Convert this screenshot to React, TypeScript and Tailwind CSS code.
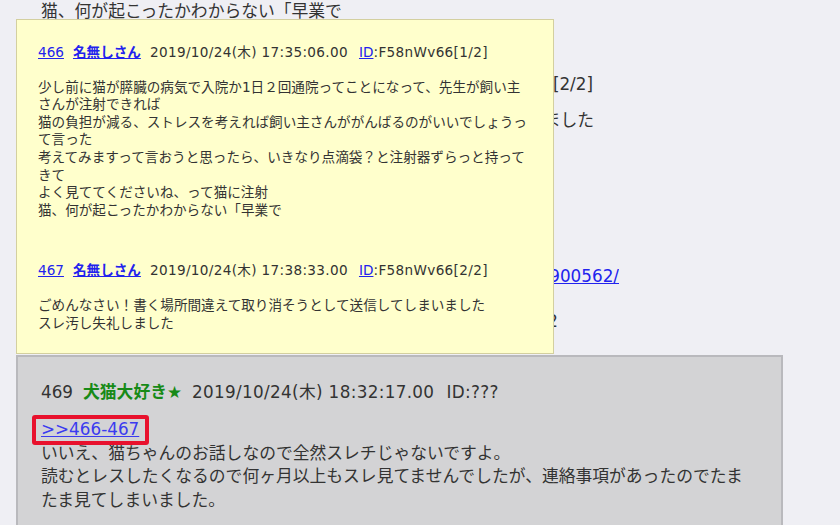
import * as React from 'react';

const font = { fontFamily: '"DejaVu Sans", "Noto Sans CJK JP", sans-serif' };

interface PostHeaderProps {
    no: string;
    name: string;
    date: string;
    id: string;
}

// header row inside the yellow quote popup
const PopupHeader = (props: PostHeaderProps) => (
    <div className="flex items-baseline whitespace-nowrap">
        <a className="text-[#2222ee] underline">{props.no}</a>
        <a className="ml-[9px] font-bold text-[#2222ee] underline">{props.name}</a>
        <span className="ml-[9px] tracking-[0.025em]">{props.date}</span>
        <a className="ml-[11px] text-[#2222ee] underline">ID</a>
        <span className="tracking-[0.025em]">:{props.id}</span>
    </div>
);

const popupPosts = [
    {
        no: '466',
        date: '2019/10/24(木) 17:35:06.00',
        id: 'F58nWv66[1/2]',
        lines: [
            '少し前に猫が膵臓の病気で入院か1日２回通院ってことになって、先生が飼い主',
            'さんが注射できれば',
            '猫の負担が減る、ストレスを考えれば飼い主さんががんばるのがいいでしょうっ',
            'て言った',
            '考えてみますって言おうと思ったら、いきなり点滴袋？と注射器ずらっと持って',
            'きて',
            'よく見ててくださいね、って猫に注射',
            '猫、何が起こったかわからない「早業で',
        ],
    },
    {
        no: '467',
        date: '2019/10/24(木) 17:38:33.00',
        id: 'F58nWv66[2/2]',
        lines: [
            'ごめんなさい！書く場所間違えて取り消そうとして送信してしまいました',
            'スレ汚し失礼しました',
        ],
    },
];

export default function App() {
    return (
        <div className="relative h-[525px] overflow-hidden bg-[#efeff4] pl-[16px] text-[#333333]" style={font}>
            {/* thread underneath the popup, only the part right of it shows */}
            <div className="text-[16.8px] leading-[23px]">
                <div className="pl-[25px] whitespace-nowrap">猫、何が起こったかわからない「早業で</div>
                <div className="ml-[538px] mt-[49.5px] flex w-[39px] justify-end overflow-hidden whitespace-nowrap">
                    ID:F58nWv66[2/2]
                </div>
                <div className="ml-[538px] mt-[13px] flex w-[40px] justify-end overflow-hidden whitespace-nowrap">
                    送信してしまいました
                </div>
                <div className="ml-[538px] mt-[133px] flex w-[65px] justify-end overflow-hidden whitespace-nowrap">
                    <a className="text-[#2222ee] underline">https://neko.5ch.net/test/read.cgi/cat/1571900562/</a>
                </div>
                <div className="ml-[538px] mt-[22px] flex w-[4px] justify-end overflow-hidden whitespace-nowrap">
                    2
                </div>
            </div>

            {/* reply card */}
            <div className="mt-[22.5px] w-[767px] border-2 border-[#b9b9bd] bg-[#d3d3d5] pl-[23px] pt-[24px] pb-[40px] text-[16.8px] leading-[23.5px]">
                <div className="flex items-baseline whitespace-nowrap">
                    <span>469</span>
                    <span className="ml-[10px] font-bold text-[#178a17]">犬猫大好き★</span>
                    <span className="ml-[10px] tracking-[0.02em]">2019/10/24(木) 18:32:17.00</span>
                    <span className="ml-[12px] tracking-[0.02em]">ID:???</span>
                </div>
                <div className="mt-[13.5px]">
                    <span className="relative inline-block">
                        <a className="text-[#3b3bef] underline">&gt;&gt;466-467</a>
                        <span className="pointer-events-none absolute -top-[3.5px] -bottom-[3.5px] -left-[9px] -right-[10px] rounded-[3px] border-4 border-[#e8112d]"></span>
                    </span>
                </div>
                <div className="whitespace-nowrap">いいえ、猫ちゃんのお話しなので全然スレチじゃないですよ。</div>
                <div className="whitespace-nowrap">読むとレスしたくなるので何ヶ月以上もスレ見てませんでしたが、連絡事項があったのでたま</div>
                <div className="whitespace-nowrap">たま見てしまいました。</div>
            </div>

            {/* anchor popup */}
            <div className="absolute left-[16px] top-[19px] h-[335px] w-[538px] border border-[#d3cf9f] bg-[#ffffcc] pl-[21px] pt-[23.7px] text-[13.6px] leading-[17.6px]">
                {popupPosts.map((p, i) => (
                    <div key={p.no} className={i > 0 ? 'mt-[42.7px]' : ''}>
                        <PopupHeader no={p.no} name="名無しさん" date={p.date} id={p.id} />
                        <div className="mt-[17.4px]">
                            {p.lines.map((l) => (
                                <div key={l} className="whitespace-nowrap">{l}</div>
                            ))}
                        </div>
                    </div>
                ))}
            </div>
        </div>
    );
}
